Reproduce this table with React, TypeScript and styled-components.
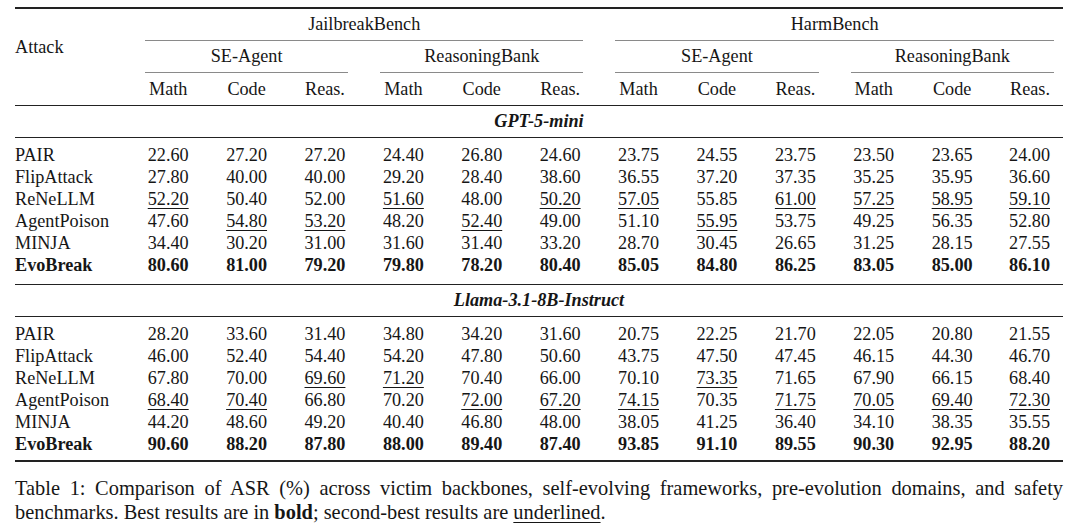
import styled, { createGlobalStyle } from 'styled-components';

const GlobalStyle = createGlobalStyle`
  html, body {
    margin: 0;
    background: #ffffff;
  }
  body {
    font-family: "Liberation Serif", "Times New Roman", serif;
    color: #161616;
  }
`

const Page = styled.div`
  width: 1048px;
  padding: 7px 17px 0 15px;
`

const Frame = styled.div`
  border-top: 2px solid #222;
  border-bottom: 2px solid #222;
`

const Table = styled.table`
  width: 100%;
  border-spacing: 0;
  table-layout: fixed;
  font-size: 18.2px;
`

const Col = styled.col<{ $w: number }>`
  width: ${props => props.$w}px;
`

const AttackHead = styled.th`
  text-align: left;
  vertical-align: top;
  font-weight: normal;
  padding: 27px 0 0;
  line-height: 22px;
  border-bottom: 1px solid #222;
`

const GroupHead = styled.th`
  padding: 0;
  font-weight: normal;
`

const CRule = styled.div<{ $l: number, $r: number }>`
  margin: 0 ${props => props.$r}px 0 ${props => props.$l}px;
  height: 31px;
  line-height: 31px;
  text-align: center;
  border-bottom: 1px solid #8a8a8a;
`

const ColHead = styled.th`
  font-weight: normal;
  padding: 0;
  line-height: 32px;
  text-align: center;
  border-bottom: 1px solid #222;
  &:last-child {
    text-align: right;
    padding-right: 13px;
  }
`

const Section = styled.tbody<{ $padBottom: number }>`
  & tr:nth-child(2) td {
    padding-top: 6px;
  }
  & tr:last-child td {
    padding-bottom: ${props => props.$padBottom}px;
  }
`

const TitleCell = styled.td<{ $top?: boolean }>`
  text-align: center;
  font-weight: bold;
  font-style: italic;
  line-height: 31px;
  padding: 0;
  border-top: ${props => props.$top ? '1px solid #222' : 'none'};
  border-bottom: 1px solid #222;
`

const NameCell = styled.td<{ $bold?: boolean }>`
  text-align: left;
  line-height: 22px;
  padding: 0;
  font-weight: ${props => props.$bold ? 'bold' : 'normal'};
`

const DataCell = styled.td<{ $bold?: boolean }>`
  text-align: center;
  line-height: 22px;
  padding: 0;
  font-weight: ${props => props.$bold ? 'bold' : 'normal'};
  &:last-child {
    text-align: right;
    padding-right: 13px;
  }
`

const Under = styled.span`
  text-decoration: underline;
  text-decoration-thickness: 1px;
  text-underline-offset: 3px;
`

const Caption = styled.p`
  margin: 14px 0 0;
  font-size: 20.4px;
  line-height: 24px;
  text-align: justify;
`

const subHeads = ['Math', 'Code', 'Reas.', 'Math', 'Code', 'Reas.', 'Math', 'Code', 'Reas.', 'Math', 'Code', 'Reas.']

// "_" marks a second-best (underlined) value
const sections = [
  {
    title: 'GPT-5-mini',
    rows: [
      ['PAIR', '22.60 27.20 27.20 24.40 26.80 24.60 23.75 24.55 23.75 23.50 23.65 24.00'],
      ['FlipAttack', '27.80 40.00 40.00 29.20 28.40 38.60 36.55 37.20 37.35 35.25 35.95 36.60'],
      ['ReNeLLM', '_52.20 50.40 52.00 _51.60 48.00 _50.20 _57.05 55.85 _61.00 _57.25 _58.95 _59.10'],
      ['AgentPoison', '47.60 _54.80 _53.20 48.20 _52.40 49.00 51.10 _55.95 53.75 49.25 56.35 52.80'],
      ['MINJA', '34.40 30.20 31.00 31.60 31.40 33.20 28.70 30.45 26.65 31.25 28.15 27.55'],
      ['EvoBreak', '80.60 81.00 79.20 79.80 78.20 80.40 85.05 84.80 86.25 83.05 85.00 86.10'],
    ],
  },
  {
    title: 'Llama-3.1-8B-Instruct',
    rows: [
      ['PAIR', '28.20 33.60 31.40 34.80 34.20 31.60 20.75 22.25 21.70 22.05 20.80 21.55'],
      ['FlipAttack', '46.00 52.40 54.40 54.20 47.80 50.60 43.75 47.50 47.45 46.15 44.30 46.70'],
      ['ReNeLLM', '67.80 70.00 _69.60 _71.20 70.40 66.00 70.10 _73.35 71.65 67.90 66.15 68.40'],
      ['AgentPoison', '_68.40 _70.40 66.80 70.20 _72.00 _67.20 _74.15 70.35 _71.75 _70.05 _69.40 _72.30'],
      ['MINJA', '44.20 48.60 49.20 40.40 46.80 48.00 38.05 41.25 36.40 34.10 38.35 35.55'],
      ['EvoBreak', '90.60 88.20 87.80 88.00 89.40 87.40 93.85 91.10 89.55 90.30 92.95 88.20'],
    ],
  },
]

const colWidths = [114, ...Array(11).fill(78.4), 71.6]

const App = () => {
  return (
    <Page>
      <GlobalStyle />
      <Frame>
        <Table>
          <colgroup>
            {colWidths.map((w, i) => <Col key={i} $w={w} />)}
          </colgroup>
          <thead>
            <tr>
              <AttackHead rowSpan={3}>Attack</AttackHead>
              <GroupHead colSpan={6}><CRule $l={16} $r={16}>JailbreakBench</CRule></GroupHead>
              <GroupHead colSpan={6}><CRule $l={16} $r={9}>HarmBench</CRule></GroupHead>
            </tr>
            <tr>
              <GroupHead colSpan={3}><CRule $l={16} $r={16}>SE-Agent</CRule></GroupHead>
              <GroupHead colSpan={3}><CRule $l={16} $r={16}>ReasoningBank</CRule></GroupHead>
              <GroupHead colSpan={3}><CRule $l={16} $r={16}>SE-Agent</CRule></GroupHead>
              <GroupHead colSpan={3}><CRule $l={16} $r={9}>ReasoningBank</CRule></GroupHead>
            </tr>
            <tr>
              {subHeads.map((h, i) => <ColHead key={i}>{h}</ColHead>)}
            </tr>
          </thead>
          {sections.map((sec, si) => (
            <Section key={sec.title} $padBottom={si === 0 ? 8 : 5}>
              <tr>
                <TitleCell colSpan={13} $top={si > 0}>{sec.title}</TitleCell>
              </tr>
              {sec.rows.map(([name, vals]) => {
                const bold = name === 'EvoBreak'
                return (
                  <tr key={name}>
                    <NameCell $bold={bold}>{name}</NameCell>
                    {vals.split(' ').map((v, i) => (
                      <DataCell key={i} $bold={bold}>
                        {v.startsWith('_') ? <Under>{v.slice(1)}</Under> : v}
                      </DataCell>
                    ))}
                  </tr>
                )
              })}
            </Section>
          ))}
        </Table>
      </Frame>
      <Caption>
        Table 1: Comparison of ASR (%) across victim backbones, self-evolving frameworks, pre-evolution domains, and safety
        benchmarks. Best results are in <b>bold</b>; second-best results are <Under>underlined</Under>.
      </Caption>
    </Page>
  );
}

export default App;
